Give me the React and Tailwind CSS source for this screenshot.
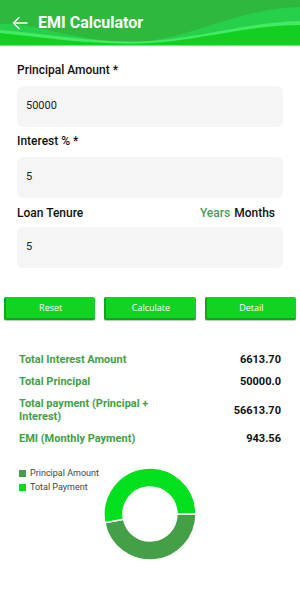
import React from "react";

const font = { fontFamily: "Roboto, 'Noto Sans', sans-serif" };

function Header() {
  return (
    <div className="relative h-[46px] w-full overflow-hidden bg-[#2eb93d]">
      <svg className="absolute inset-0 h-full w-full" viewBox="0 0 300 46" preserveAspectRatio="none">
        <path d="M0 24 C 30 22, 70 40, 125 42 C 185 44, 230 9, 300 7 L300 46 L0 46 Z" fill="#27d04a" />
        <path d="M0 30 C 50 34, 100 44, 150 41 C 200 38, 250 22, 300 21 L300 46 L0 46 Z" fill="#45ea63" />
        <path d="M0 33 C 50 38, 100 46, 150 43 C 200 40, 250 25, 300 25 L300 46 L0 46 Z" fill="#12cf22" />
        <rect x="0" y="45" width="300" height="1" fill="#6ef07e" />
      </svg>
      <div className="relative flex h-full items-center pl-[12px]">
        <svg width="16" height="14" viewBox="0 0 16 14" fill="none" stroke="white" strokeWidth="1.5" strokeLinecap="round" strokeLinejoin="round">
          <path d="M15 7H2" />
          <path d="M7 1.5L1.5 7L7 12.5" />
        </svg>
        <span className="ml-[10px] text-[16px] font-bold text-white leading-none">EMI Calculator</span>
      </div>
    </div>
  );
}

function Field({ value }) {
  return (
    <div className="flex h-[41px] items-center rounded-[6px] bg-[#f5f5f5] pl-[9px] text-[11px] text-[#222]">
      {value}
    </div>
  );
}

function Btn({ children }) {
  return (
    <div className="flex h-[23px] flex-1 items-center justify-center rounded-[2px] border-l-[2px] border-b-[2px] border-[#0aa81a] bg-[#10d322] text-[9px] text-white shadow-[0_1px_1px_rgba(0,0,0,0.25)]" style={{ fontFamily: "'Open Sans', sans-serif" }}>
      {children}
    </div>
  );
}

function Row({ label, value }) {
  return (
    <div className="flex items-center justify-between">
      <div className="w-[150px] text-[11px] font-bold leading-[13px] text-[#43a047]">{label}</div>
      <div className="text-[11px] font-bold leading-[13px] text-[#111]">{value}</div>
    </div>
  );
}

function Chart() {
  return (
    <div className="relative mt-[14px] h-[120px] w-full">
      <div className="absolute left-[19px] top-[10px] flex flex-col gap-[5px] text-[9px] leading-[9px] text-[#444]">
        <div className="flex items-center gap-[4px]">
          <span className="h-[7px] w-[7px] bg-[#43a047]" />
          <span>Principal Amount</span>
        </div>
        <div className="flex items-center gap-[4px]">
          <span className="h-[7px] w-[7px] bg-[#00e01c]" />
          <span>Total Payment</span>
        </div>
      </div>
      <svg className="absolute inset-0" width="300" height="120" viewBox="0 0 300 120">
        <path d="M 196 55 A 46 46 0 0 1 104.85 63.78 L 123.5 60.15 A 27 27 0 0 0 177 55 Z" fill="#43a047" stroke="white" strokeWidth="1.5" />
        <path d="M 104.85 63.78 A 46 46 0 1 1 196 55 L 177 55 A 27 27 0 1 0 123.5 60.15 Z" fill="#00e01c" stroke="white" strokeWidth="1.5" />
      </svg>
    </div>
  );
}

export default function App() {
  return (
    <div className="h-[608px] w-[300px] overflow-hidden bg-white" style={font}>
      <Header />
      <div className="px-[17px]">
        <div className="mt-[16px] text-[12px] font-medium leading-[16px] text-[#111]">Principal Amount *</div>
        <div className="mt-[8px]"><Field value="50000" /></div>
        <div className="mt-[6px] text-[12px] font-medium leading-[16px] text-[#111]">Interest % *</div>
        <div className="mt-[8px]"><Field value="5" /></div>
        <div className="mt-[7px] flex items-center justify-between pr-[8px] text-[12px] font-medium leading-[16px]">
          <span className="text-[#111]">Loan Tenure</span>
          <span>
            <span className="text-[#4a9d5b]">Years</span>
            <span className="ml-[4px] text-[#111]">Months</span>
          </span>
        </div>
        <div className="mt-[6px]"><Field value="5" /></div>
      </div>
      <div className="mt-[29px] flex gap-[9px] px-[4px]">
        <Btn>Reset</Btn>
        <Btn>Calculate</Btn>
        <Btn>Detail</Btn>
      </div>
      <div className="mt-[33px] flex flex-col gap-[9px] pl-[19px] pr-[19px]">
        <Row label="Total Interest Amount" value="6613.70" />
        <Row label="Total Principal" value="50000.0" />
        <Row label="Total payment (Principal + Interest)" value="56613.70" />
        <Row label="EMI (Monthly Payment)" value="943.56" />
      </div>
      <Chart />
    </div>
  );
}
